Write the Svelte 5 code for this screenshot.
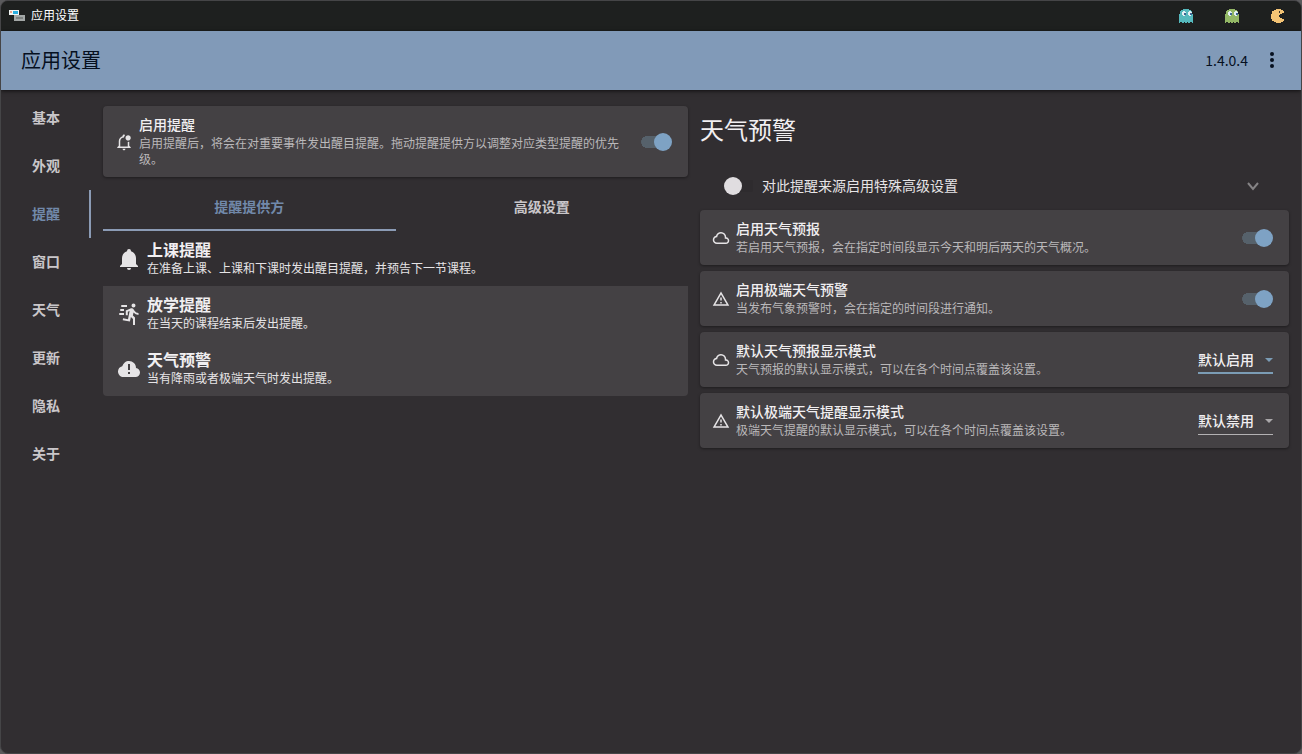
<script lang="ts">
	const navItems = ['基本', '外观', '提醒', '窗口', '天气', '更新', '隐私', '关于'];
	const tabs = ['提醒提供方', '高级设置'];

	const icons = {
		bellBadge:
			'M19 17V11.8C18.5 11.9 18 12 17.5 12H17V18H7V11C7 8.2 9.2 6 12 6C12.1 4.7 12.7 3.6 13.5 2.7C13.2 2.3 12.6 2 12 2C10.9 2 10 2.9 10 4V4.3C7 5.2 5 7.9 5 11V17L3 19V20H21V19L19 17M10 21C10 22.1 10.9 23 12 23S14 22.1 14 21H10M21 6.5C21 8.4 19.4 10 17.5 10S14 8.4 14 6.5 15.6 3 17.5 3 21 4.6 21 6.5',
		bell: 'M21 19V20H3V19L5 17V11C5 7.9 7.03 5.17 10 4.29C10 4.19 10 4.1 10 4A2 2 0 0 1 12 2A2 2 0 0 1 14 4C14 4.1 14 4.19 14 4.29C16.97 5.17 19 7.9 19 11V17L21 19M14 21A2 2 0 0 1 12 23A2 2 0 0 1 10 21',
		run: 'M16.5 5.5A2 2 0 0 0 18.5 3.5A2 2 0 0 0 16.5 1.5A2 2 0 0 0 14.5 3.5A2 2 0 0 0 16.5 5.5M12.9 19.4L13.9 15L16 17V23H18V15.5L15.9 13.5L16.5 10.5A6.78 6.78 0 0 0 21.5 13V11A4.65 4.65 0 0 1 17.5 8.8L16.5 7.2A2.14 2.14 0 0 0 14.8 6.2C14.5 6.2 14.3 6.3 14 6.3L8.8 8.5V13.2H10.8V9.8L12.6 9.1L11 17.2L6.1 16.2L5.7 18.2L12.9 19.4M4 9A1 1 0 0 1 3 8A1 1 0 0 1 4 7H7V9H4M5 5A1 1 0 0 1 4 4A1 1 0 0 1 5 3H10V5H5M3 13A1 1 0 0 1 2 12A1 1 0 0 1 3 11H7V13H3Z',
		cloudAlert:
			'M21.86 12.5A4.313 4.313 0 0 0 19 11C19 9.05 18.32 7.4 16.96 6.04C15.6 4.68 13.95 4 12 4C10.42 4 9 4.47 7.75 5.43S5.67 7.62 5.25 9.15C4 9.43 2.96 10.08 2.17 11.1S1 13.28 1 14.58C1 16.09 1.54 17.38 2.61 18.43C3.69 19.5 5 20 6.5 20H18.5C19.75 20 20.81 19.56 21.69 18.69C22.56 17.81 23 16.75 23 15.5C23 14.35 22.62 13.35 21.86 12.5M13 17H11V15H13V17M13 13H11V7H13V13Z',
		cloud: 'M6.5 20Q4.22 20 2.61 18.43 1 16.85 1 14.58 1 12.63 2.17 11.1 3.35 9.57 5.25 9.15 5.88 6.85 7.75 5.43 9.63 4 12 4 14.93 4 16.96 6.04 19 8.07 19 11 20.73 11.2 21.86 12.5 23 13.78 23 15.5 23 17.38 21.69 18.69 20.38 20 18.5 20M6.5 18H18.5Q19.55 18 20.27 17.27 21 16.55 21 15.5 21 14.45 20.27 13.73 19.55 13 18.5 13H17V11Q17 8.93 15.54 7.46 14.08 6 12 6 9.93 6 8.46 7.46 7 8.93 7 11H6.5Q5.05 11 4.03 12.03 3 13.05 3 14.5 3 15.95 4.03 17 5.05 18 6.5 18Z',
		alert: 'M12 2L1 21H23M12 6L19.53 19H4.47M11 10V14H13V10M11 16V18H13V16'
	};

	const providers = [
		{ id: 'class', icon: icons.bell, name: '上课提醒', desc: '在准备上课、上课和下课时发出醒目提醒，并预告下一节课程。' },
		{ id: 'after', icon: icons.run, name: '放学提醒', desc: '在当天的课程结束后发出提醒。' },
		{ id: 'weather', icon: icons.cloudAlert, name: '天气预警', desc: '当有降雨或者极端天气时发出提醒。' }
	];

	const modes = ['默认启用', '默认禁用'];

	let activeNav = $state('提醒');
	let activeTab = $state('提醒提供方');
	let notify = $state(true);
	let special = $state(false);

	let switches = $state([
		{ id: 'forecast', icon: icons.cloud, name: '启用天气预报', desc: '若启用天气预报，会在指定时间段显示今天和明后两天的天气概况。', on: true },
		{ id: 'warning', icon: icons.alert, name: '启用极端天气预警', desc: '当发布气象预警时，会在指定的时间段进行通知。', on: true }
	]);

	let selects = $state([
		{ id: 'forecast-mode', icon: icons.cloud, name: '默认天气预报显示模式', desc: '天气预报的默认显示模式，可以在各个时间点覆盖该设置。', value: '默认启用', active: true },
		{ id: 'warning-mode', icon: icons.alert, name: '默认极端天气提醒显示模式', desc: '极端天气提醒的默认显示模式，可以在各个时间点覆盖该设置。', value: '默认禁用', active: false }
	]);
</script>

{#snippet icon(path: string)}
	<svg class="icon" viewBox="0 0 24 24" fill="currentColor" aria-hidden="true"><path d={path} /></svg>
{/snippet}

{#snippet ghost(color: string)}
	<svg width="16" height="16" viewBox="0 0 16 16" aria-hidden="true">
		<path
			fill={color}
			d="M5 1h6v1h2v1h1v3h1v9h-1v-1h-2v1h-2v-1H9v1H7v-1H6v1H4v-1H2v1H1V6h1V3h1V2h2z"
		/>
		<path fill="#e4f0f4" d="M4 4h1V3h2v1h1v3H7v1H5V7H4zM10 4h1V3h2v1h1v3h-1v1h-2V7h-1z" />
		<path fill="#3d6794" d="M6 5h2v2H6zM12 5h2v2h-2z" />
	</svg>
{/snippet}

<div class="window">
	<div class="titlebar">
		<svg class="logo" width="16" height="16" viewBox="0 0 16 16" aria-hidden="true">
			<path fill="#f1f5f4" d="M0 2h10v5H0z" />
			<path fill="#2aaee0" d="M4 3h5v3H4z" />
			<path fill="#e7a48e" d="M1 3h2v2H1z" />
			<path fill="#a3a7a6" d="M5 7h11v6H5z" />
			<path fill="#7d8180" d="M7 9h7v2H7z" />
		</svg>
		<span class="title">应用设置</span>
		<div class="window-buttons">
			<button aria-label="最小化">{@render ghost('#55b9bd')}</button>
			<button aria-label="最大化">{@render ghost('#93b866')}</button>
			<button aria-label="关闭">
				<svg width="16" height="16" viewBox="0 0 16 16" aria-hidden="true">
					<path
						fill="#f3c374"
						d="M6 1h5v1h2v1h1v2h-2v1h-2v1H9v2h1v1h2v1h2v2h-1v1h-2v1H6v-1H4v-1H2v-2H1V6h1V3h2V2h2z"
					/>
					<path fill="#3b342a" d="M9 3h1v2H9z" />
				</svg>
			</button>
		</div>
	</div>

	<header class="appbar">
		<h1>应用设置</h1>
		<span class="version">1.4.0.4</span>
		<button class="more" aria-label="更多">
			<svg width="24" height="24" viewBox="0 0 24 24" fill="currentColor" aria-hidden="true">
				<circle cx="12" cy="5" r="2" />
				<circle cx="12" cy="11" r="2" />
				<circle cx="12" cy="17" r="2" />
			</svg>
		</button>
	</header>

	<div class="body">
		<nav>
			{#each navItems as item (item)}
				<button class:active={item === activeNav} onclick={() => (activeNav = item)}>{item}</button>
			{/each}
		</nav>

		<section class="left">
			<div class="card">
				{@render icon(icons.bellBadge)}
				<label class="text" for="notify">
					<span class="name">启用提醒</span>
					<span class="desc">启用提醒后，将会在对重要事件发出醒目提醒。拖动提醒提供方以调整对应类型提醒的优先级。</span>
				</label>
				<input id="notify" class="switch" type="checkbox" bind:checked={notify} />
			</div>

			<div class="tabs">
				{#each tabs as tab (tab)}
					<button class:active={tab === activeTab} onclick={() => (activeTab = tab)}>{tab}</button>
				{/each}
			</div>

			<div class="providers">
				{#each providers as provider (provider.id)}
					<button class="provider" class:raised={provider.id !== 'class'}>
						{@render icon(provider.icon)}
						<span class="text">
							<span class="name">{provider.name}</span>
							<span class="desc">{provider.desc}</span>
						</span>
					</button>
				{/each}
			</div>
		</section>

		<section class="right">
			<h2>天气预警</h2>
			<div class="expander">
				<input id="special" class="switch" type="checkbox" bind:checked={special} />
				<label for="special">对此提醒来源启用特殊高级设置</label>
				<svg width="16" height="16" viewBox="0 0 16 16" fill="none" stroke="#858385" stroke-width="2" aria-hidden="true">
					<path d="M3 5l5 6 5-6" />
				</svg>
			</div>

			<div class="cards">
				{#each switches as item (item.id)}
					<div class="card">
						{@render icon(item.icon)}
						<label class="text" for={item.id}>
							<span class="name">{item.name}</span>
							<span class="desc">{item.desc}</span>
						</label>
						<input id={item.id} class="switch" type="checkbox" bind:checked={item.on} />
					</div>
				{/each}
				{#each selects as item (item.id)}
					<div class="card">
						{@render icon(item.icon)}
						<label class="text" for={item.id}>
							<span class="name">{item.name}</span>
							<span class="desc">{item.desc}</span>
						</label>
						<div class="select" class:active={item.active}>
							<select id={item.id} bind:value={item.value}>
								{#each modes as mode (mode)}
									<option value={mode}>{mode}</option>
								{/each}
							</select>
						</div>
					</div>
				{/each}
			</div>
		</section>
	</div>
</div>

<style>
	:global(body) {
		background: #5a5a5c;
	}

	.window {
		display: flex;
		flex-direction: column;
		box-sizing: border-box;
		min-height: 100vh;
		overflow: hidden;
		border: 1px solid #454547;
		border-radius: 8px;
		background: #312e31;
		color: #e6e4e6;
		font-family: 'Noto Sans CJK SC', sans-serif;
		font-size: 14px;
		line-height: 20px;
	}

	button {
		padding: 0;
		border: none;
		background: transparent;
		color: inherit;
		font: inherit;
		cursor: pointer;
	}

	.titlebar {
		display: flex;
		align-items: center;
		height: 30px;
		padding-left: 8px;
		background: #1e201f;
		color: #fff;
		font-size: 12px;
	}

	.logo {
		margin-right: 6px;
	}

	.title {
		padding-bottom: 2px;
	}

	.window-buttons {
		display: flex;
		align-self: stretch;
		margin-left: auto;
	}

	.window-buttons button {
		display: flex;
		align-items: center;
		justify-content: center;
		width: 46px;
	}

	.appbar {
		display: flex;
		align-items: center;
		height: 59px;
		padding: 0 17px 0 20px;
		background: #819ab8;
		color: #06101f;
		box-shadow: 0 1px 4px rgba(0, 0, 0, 0.7);
	}

	h1 {
		flex: 1;
		margin: 0;
		padding-bottom: 2px;
		font-size: 20px;
		font-weight: 400;
		line-height: 28px;
	}

	.version {
		padding-bottom: 2px;
	}

	.more {
		display: flex;
		margin-left: 12px;
	}

	.body {
		display: grid;
		grid-template-columns: 90px 1fr 1fr;
		flex: 1;
	}

	nav {
		display: flex;
		flex-direction: column;
		padding-top: 4px;
	}

	nav button {
		height: 48px;
		padding: 0 0 2px 2px;
		border-right: 2px solid transparent;
		font-weight: 700;
		color: #c9c6c9;
	}

	nav button.active {
		border-color: #8b9bb5;
		color: #7189aa;
	}

	.left {
		padding: 16px 8px 0 12px;
	}

	.right {
		padding: 16px 12px 0 4px;
	}

	.card {
		display: flex;
		align-items: center;
		padding: 9px 16px 9px 12px;
		border-radius: 4px;
		background: #444144;
		box-shadow: 0 1px 3px rgba(0, 0, 0, 0.4);
	}

	.icon {
		flex: none;
		width: 18px;
		height: 18px;
		margin-right: 6px;
	}

	.text {
		display: flex;
		flex: 1;
		flex-direction: column;
		gap: 2px;
		padding-bottom: 1px;
		text-align: left;
	}

	.name {
		font-weight: 500;
		line-height: 18px;
		color: #f1eff1;
	}

	.desc {
		color: #bab8ba;
		font-size: 12px;
		line-height: 16px;
	}

	.switch {
		display: flex;
		align-items: center;
		flex: none;
		width: 31px;
		height: 18px;
		margin: 0 0 0 16px;
		border-radius: 9px;
		appearance: none;
		background: linear-gradient(#2e2b2e, #2e2b2e) center / 26px 12px no-repeat;
		cursor: pointer;
	}

	.switch::before {
		content: '';
		width: 18px;
		height: 18px;
		border-radius: 50%;
		background: #e0dde0;
	}

	.switch:checked {
		justify-content: flex-end;
		background:
			radial-gradient(circle at 6px 9px, #56616b 6px, transparent 6px),
			linear-gradient(#56616b, #56616b) 6px center / 16px 12px no-repeat;
	}

	.switch:checked::before {
		background: #7ea2c4;
	}

	.tabs {
		display: grid;
		grid-template-columns: 1fr 1fr;
		margin-top: 6px;
	}

	.tabs button {
		height: 48px;
		border-bottom: 2px solid transparent;
		font-weight: 700;
		color: #c9c6c9;
	}

	.tabs button.active {
		border-color: #8b9bb5;
		color: #7189aa;
	}

	.providers {
		display: flex;
		flex-direction: column;
		overflow: hidden;
		border-radius: 4px;
	}

	.provider {
		display: flex;
		align-items: center;
		padding: 7px 14px;
	}

	.provider.raised {
		background: #444144;
	}

	.provider .icon {
		width: 24px;
		height: 24px;
	}

	.provider .text {
		gap: 0;
		padding-bottom: 3px;
	}

	.provider .name {
		font-size: 16px;
		font-weight: 700;
		line-height: 22px;
	}

	.provider .desc {
		color: #e6e4e6;
	}

	h2 {
		margin: 7px 0 17px;
		font-size: 24px;
		font-weight: 400;
		line-height: 32px;
		color: #f1eff1;
	}

	.expander {
		display: flex;
		align-items: center;
		height: 48px;
		padding: 0 28px 0 24px;
	}

	.expander .switch {
		margin: 0 7px 0 0;
	}

	.expander label {
		flex: 1;
		padding-bottom: 2px;
	}

	.cards {
		display: flex;
		flex-direction: column;
		gap: 6px;
	}

	.select {
		position: relative;
		width: 75px;
		height: 28px;
		box-sizing: border-box;
		border-bottom: 1px solid #b3b1b3;
		color: #aaa8aa;
	}

	.select.active {
		border-bottom: 2px solid #7b9cb5;
		color: #7b9cb5;
	}

	.select::after {
		content: '';
		position: absolute;
		top: 12px;
		right: 0;
		border: 4px solid transparent;
		border-top-color: currentColor;
		border-bottom: none;
		pointer-events: none;
	}

	select {
		width: 100%;
		height: 26px;
		padding: 0;
		border: none;
		appearance: none;
		background: transparent;
		color: #f1eff1;
		font: inherit;
		font-weight: 500;
	}

	option {
		background: #444144;
	}
</style>
